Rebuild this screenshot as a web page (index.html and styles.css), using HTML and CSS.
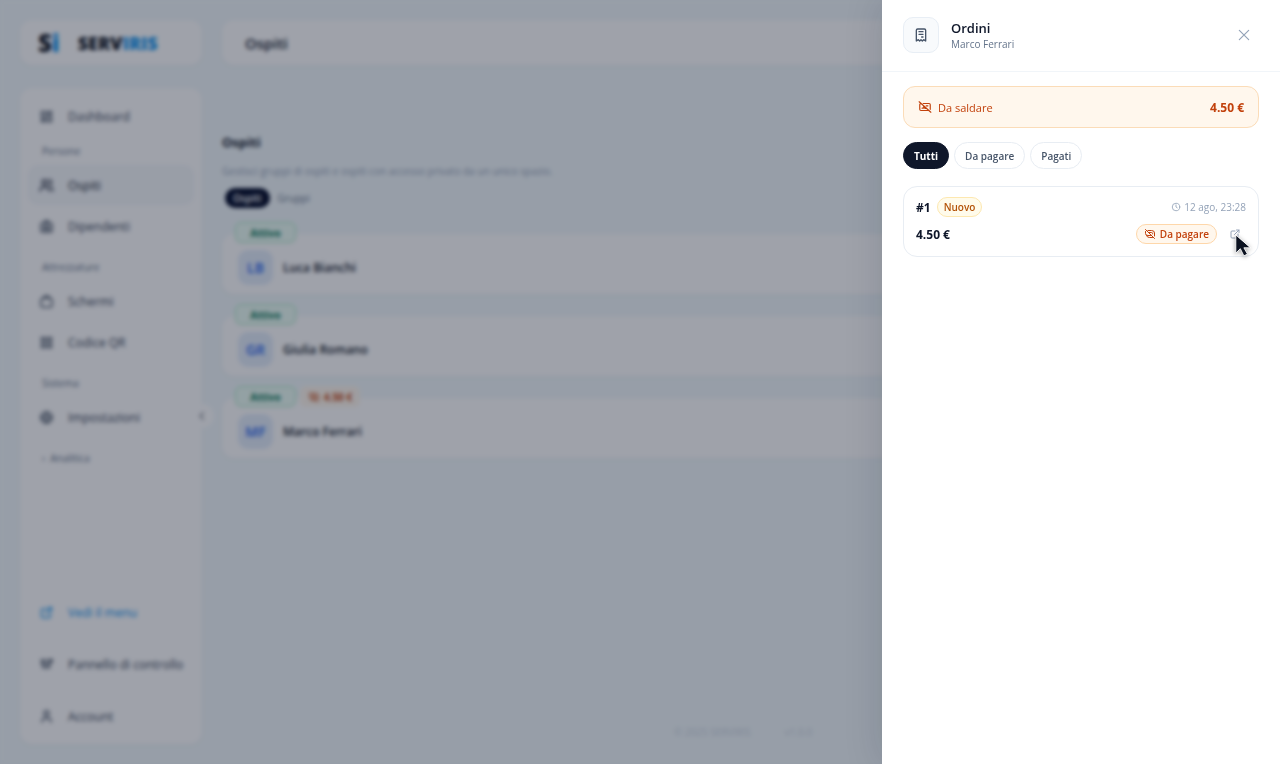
FILE: index.html
```html
<!DOCTYPE html>
<html lang="it">
<head>
<meta charset="utf-8">
<meta name="viewport" content="width=device-width, initial-scale=1">
<title>Ospiti - Serviris</title>
<link rel="stylesheet" href="styles.css">
</head>
<body>
<svg class="sprite" aria-hidden="true">
  <symbol id="grid" viewBox="0 0 24 24"><path d="M4 4h6v8H4zM4 16h6v4H4zM14 12h6v8h-6zM14 4h6v4h-6z"/></symbol>
  <symbol id="users" viewBox="0 0 24 24"><circle cx="9" cy="7" r="4"/><path d="M2 21v-2a4 4 0 0 1 4-4h6a4 4 0 0 1 4 4v2M16 3a4 4 0 0 1 0 8M22 21v-2a4 4 0 0 0-3-4"/></symbol>
  <symbol id="badge" viewBox="0 0 24 24"><rect x="3" y="6" width="18" height="15" rx="3"/><path d="M9 6V3h6v3M7 17h10M8 11h3v3H8zM14 11h3M14 14h3"/></symbol>
  <symbol id="screen" viewBox="0 0 24 24"><rect x="3" y="7" width="18" height="14" rx="4"/><path d="M7 7l2-4h6l2 4"/></symbol>
  <symbol id="qr" viewBox="0 0 24 24"><path d="M4 4h6v6H4zM14 4h6v6h-6zM4 14h6v6H4zM14 14h6v6h-6z"/></symbol>
  <symbol id="gear" viewBox="0 0 24 24"><circle cx="12" cy="12" r="9"/><circle cx="12" cy="12" r="4"/><path d="M12 3v5M12 16v5M3 12h5M16 12h5"/></symbol>
  <symbol id="external" viewBox="0 0 24 24"><path d="M12 6H6a2 2 0 0 0-2 2v10a2 2 0 0 0 2 2h10a2 2 0 0 0 2-2v-6M11 13l9-9M15 4h5v5"/></symbol>
  <symbol id="panel" viewBox="0 0 24 24"><path d="M3 5h10M3 10h8M6 5v12h11v-7M11 14l9-10M16 4h5v5"/></symbol>
  <symbol id="user" viewBox="0 0 24 24"><circle cx="12" cy="7" r="4"/><path d="M5 21v-2a4 4 0 0 1 4-4h6a4 4 0 0 1 4 4v2"/></symbol>
  <symbol id="receipt" viewBox="0 0 24 24"><path d="M5 21V5a2 2 0 0 1 2-2h10a2 2 0 0 1 2 2v16l-3-2-2 2-2-2-2 2-2-2zM9 7h6M9 11h6M13 15h2"/></symbol>
  <symbol id="cashoff" viewBox="0 0 24 24"><path d="M9 6h10a2 2 0 0 1 2 2v8M17 18H5a2 2 0 0 1-2-2V8a2 2 0 0 1 1-1.700M2 3l20 18M10 10a3 3 0 0 0 4 4M14 10h3M7 14h2"/></symbol>
  <symbol id="coinoff" viewBox="0 0 24 24"><path d="M8 5h7a6 5 0 0 1 6 5v6M17 19h-6a6 5 0 0 1-6-4M3 3l18 18M3 7v4a5 4 0 0 0 5 4h5M10 9h5a2 2 0 0 1 2 3"/></symbol>
  <symbol id="clock" viewBox="0 0 24 24"><circle cx="12" cy="12" r="9"/><path d="M12 7v5l3 2"/></symbol>
  <symbol id="close" viewBox="0 0 24 24"><path d="M4 4l16 16M20 4L4 20"/></symbol>
  <symbol id="left" viewBox="0 0 24 24"><path d="M15 5l-7 7 7 7"/></symbol>
</svg>

<div class="app">
  <aside class="side">
    <div class="panel brand"><span class="mark">S<span class="sky">i</span></span><span class="wordmark">SERV<span class="sky">IRIS</span></span></div>
    <nav class="panel nav">
      <a class="item" href="#"><svg class="icon"><use href="#grid"/></svg>Dashboard</a>
      <div class="group first">Persone</div>
      <a class="item active" href="#"><svg class="icon"><use href="#users"/></svg>Ospiti</a>
      <a class="item" href="#"><svg class="icon"><use href="#badge"/></svg>Dipendenti</a>
      <div class="group">Attrezzature</div>
      <a class="item" href="#"><svg class="icon"><use href="#screen"/></svg>Schermi</a>
      <a class="item" href="#"><svg class="icon"><use href="#qr"/></svg>Codice QR</a>
      <div class="group">Sistema</div>
      <a class="item" href="#"><svg class="icon"><use href="#gear"/></svg>Impostazioni</a>
      <div class="group">›&nbsp; Analitica</div>
      <div class="nav-end">
        <a class="item sky" href="#"><svg class="icon"><use href="#external"/></svg>Vedi il menu</a>
        <a class="item" href="#"><svg class="icon"><use href="#panel"/></svg>Pannello di controllo</a>
        <a class="item" href="#"><svg class="icon"><use href="#user"/></svg>Account</a>
      </div>
      <button class="collapse" aria-label="Comprimi menu"><svg class="tiny"><use href="#left"/></svg></button>
    </nav>
  </aside>
  <main class="main">
    <header class="panel topbar">Ospiti</header>
    <section class="content">
      <h1 class="title">Ospiti</h1>
      <p class="subtitle">Gestisci gruppi di ospiti e ospiti con accesso privato da un unico spazio.</p>
      <div class="tabs"><button class="tab on">Ospiti</button><button class="tab">Gruppi</button></div>
      <div class="guests">
        <article class="panel guest"><div class="tags"><span class="tag ok">Attivo</span></div><span class="avatar">LB</span><span>Luca Bianchi</span></article>
        <article class="panel guest"><div class="tags"><span class="tag ok">Attivo</span></div><span class="avatar">GR</span><span>Giulia Romano</span></article>
        <article class="panel guest"><div class="tags"><span class="tag ok">Attivo</span><span class="tag due"><svg class="tiny"><use href="#coinoff"/></svg>4.50 €</span></div><span class="avatar">MF</span><span>Marco Ferrari</span></article>
      </div>
    </section>
    <footer class="footer"><span>© 2025 SERVIRIS</span><span>v1.0.0</span></footer>
  </main>
</div>

<div class="overlay">
  <section class="drawer" role="dialog" aria-labelledby="drawer-title">
    <header class="drawer-head">
      <span class="drawer-icon"><svg class="icon"><use href="#receipt"/></svg></span>
      <div class="heading"><h2 class="drawer-title" id="drawer-title">Ordini</h2><p class="drawer-sub">Marco Ferrari</p></div>
      <button class="close" aria-label="Chiudi"><svg class="small"><use href="#close"/></svg></button>
    </header>
    <div class="drawer-body">
      <div class="balance"><svg class="small"><use href="#cashoff"/></svg><span>Da saldare</span><strong class="sum">4.50 €</strong></div>
      <div class="filters"><button class="chip on">Tutti</button><button class="chip">Da pagare</button><button class="chip">Pagati</button></div>
      <article class="order">
        <div class="row"><strong class="number">#1</strong><span class="pill new">Nuovo</span><time class="when"><svg class="tiny"><use href="#clock"/></svg>12 ago, 23:28</time></div>
        <div class="row"><strong class="price">4.50 €</strong><span class="pill unpaid"><svg class="tiny"><use href="#coinoff"/></svg>Da pagare</span>
          <button class="open" aria-label="Apri ordine"><svg class="tiny"><use href="#external"/></svg>
            <svg class="cursor" viewBox="0 0 20 26" aria-hidden="true"><path d="M2 1v20l5-5 4 8 4-2-4-7h7z"/></svg></button></div>
      </article>
    </div>
  </section>
</div>
</body>
</html>
```
FILE: styles.css
```css
* { box-sizing: border-box; }
body { margin: 0; background: #f2f9fc; color: #0f172a; font-family: "Open Sans", "Noto Sans", sans-serif; font-size: 12px; }
button { margin: 0; padding: 0; border: 0; background: none; color: inherit; font: inherit; cursor: pointer; }
a { color: inherit; text-decoration: none; }
h1, h2, p { margin: 0; }
svg { fill: none; stroke: currentColor; stroke-width: 2; stroke-linecap: round; stroke-linejoin: round; flex: none; }
.sprite { position: absolute; width: 0; height: 0; }
.icon { width: 16px; height: 16px; }
.small { width: 14px; height: 14px; }
.tiny { width: 12px; height: 12px; }
.sky { color: #0e91ee; }

.app { display: flex; gap: 20px; min-height: 100vh; padding: 20px 16px 20px 20px; }
.panel { background: #fff; border-radius: 12px; box-shadow: 0 1px 4px rgba(15, 23, 42, .04); }
.side { display: flex; flex-direction: column; gap: 23px; width: 182px; flex: none; }
.brand { display: flex; align-items: center; gap: 18px; height: 45px; padding-left: 18px; font-weight: 800; color: #0b1220; }
.mark { font-size: 24px; }
.wordmark { font-size: 18px; }
.nav { position: relative; display: flex; flex-direction: column; flex: 1; gap: 1px; padding: 8px 8px 8px; }
.item { display: flex; align-items: center; gap: 14px; height: 40px; padding-left: 11px; border-radius: 10px; color: #334155; font-weight: 500; white-space: nowrap; }
.item .icon { width: 15px; height: 15px; }
.item.sky { color: #0e91ee; }
.item.active { background: #f5f8fb; color: #0f172a; }
.group { margin: 13px 14px 6px; color: #64748b; font-size: 10px; line-height: 14px; }
.group.first { margin-top: 7px; }
.nav-end { display: flex; flex-direction: column; gap: 12px; margin-top: auto; }
.collapse { position: absolute; right: -12px; top: 316px; display: grid; place-items: center; width: 24px; height: 24px; border-radius: 50%; background: #fff; }

.main { display: flex; flex-direction: column; flex: 1; min-width: 0; }
.topbar { display: flex; align-items: center; height: 45px; padding-left: 23px; font-size: 15px; font-weight: 600; }
.content { padding-top: 67px; }
.title { font-size: 13px; line-height: 20px; font-weight: 700; }
.subtitle { margin-top: 11px; color: #94a3b8; font-size: 10px; line-height: 16px; }
.tabs { display: flex; gap: 0; margin: 9px 3px 0; }
.tab { height: 20px; padding: 0 8px; border-radius: 10px; color: #64748b; font-size: 10px; font-weight: 500; }
.tab.on { background: #020b28; color: #fff; font-weight: 600; }
.guests { display: grid; gap: 22px; margin-top: 26px; }
.guest { position: relative; display: flex; align-items: center; gap: 10px; height: 60px; padding: 6px 16px 0; font-weight: 600; }
.tags { position: absolute; left: 13px; top: -12px; display: flex; gap: 4px; }
.tag { display: flex; align-items: center; justify-content: center; gap: 4px; height: 21px; border-radius: 6px; font-size: 10px; font-weight: 700; }
.ok { width: 61px; border: 1px solid #a7e8c4; background: #ecfdf5; color: #047857; }
.due { width: 60px; background: #fff7ed; color: #c2410c; }
.avatar { display: grid; place-items: center; width: 35px; height: 35px; border-radius: 10px; background: #e3edfb; color: #2563eb; font-size: 14px; font-weight: 600; }
.footer { display: flex; justify-content: center; gap: 34px; margin-top: auto; padding-bottom: 4px; color: #cbd5e1; font-size: 10px; line-height: 16px; }

.overlay { position: fixed; inset: 0; display: flex; justify-content: flex-end; background: rgba(15, 23, 42, .4); backdrop-filter: blur(2px); }
.drawer { width: 398px; max-width: 100%; background: #fff; box-shadow: 0 0 36px rgba(15, 23, 42, .15); overflow: auto; }
.drawer-head { display: flex; align-items: center; gap: 12px; padding: 17px 21px 18px; border-bottom: 1px solid #f1f5f9; }
.drawer-icon { display: grid; place-items: center; width: 36px; height: 36px; border: 1px solid #e8eef5; border-radius: 10px; background: #f8fafc; color: #475569; }
.heading { flex: 1; }
.drawer-title { font-size: 13px; line-height: 18px; font-weight: 600; }
.drawer-sub { color: #64748b; font-size: 10px; line-height: 14px; }
.close { display: grid; place-items: center; width: 30px; height: 30px; color: #94a3b8; }
.drawer-body { padding: 14px 21px; }
.balance { display: flex; align-items: center; gap: 6px; height: 42px; padding: 0 14px; border: 1px solid #fbdcb8; border-radius: 12px; background: #fff7ed; color: #c2410c; font-size: 11px; font-weight: 500; }
.sum { margin-left: auto; font-size: 12px; }
.filters { display: flex; gap: 5px; margin: 14px 0 17px; }
.chip { height: 27px; padding: 0 10px; border: 1px solid #e8edf3; border-radius: 14px; color: #475569; font-size: 10px; font-weight: 600; }
.chip.on { border-color: #0f172a; background: #0f172a; color: #fff; font-weight: 700; }
.order { display: grid; gap: 7px; padding: 10px 12px 12px; border: 1px solid #e8edf3; border-radius: 14px; }
.row { display: flex; align-items: center; gap: 6px; height: 20px; }
.number, .price { font-size: 12px; }
.pill { display: flex; align-items: center; gap: 4px; height: 20px; padding: 0 7px; border: 1px solid; border-radius: 10px; font-size: 10px; font-weight: 600; }
.new { padding: 0 6px; border-color: #fde8b0; background: #fffbeb; color: #b45309; }
.unpaid { margin-left: auto; border-color: #fed7aa; background: #fff7ed; color: #c2410c; }
.when { display: flex; align-items: center; gap: 3px; margin-left: auto; color: #94a3b8; font-size: 10px; }
.when .tiny { width: 10px; height: 10px; }
.open { position: relative; display: grid; place-items: center; width: 23px; height: 20px; color: #94a3b8; }
.cursor { position: absolute; left: 11px; top: 10px; width: 18px; height: 24px; fill: #0b1220; stroke: #fff; stroke-width: 1; filter: drop-shadow(0 1px 2px rgba(0, 0, 0, .35)); }
```
